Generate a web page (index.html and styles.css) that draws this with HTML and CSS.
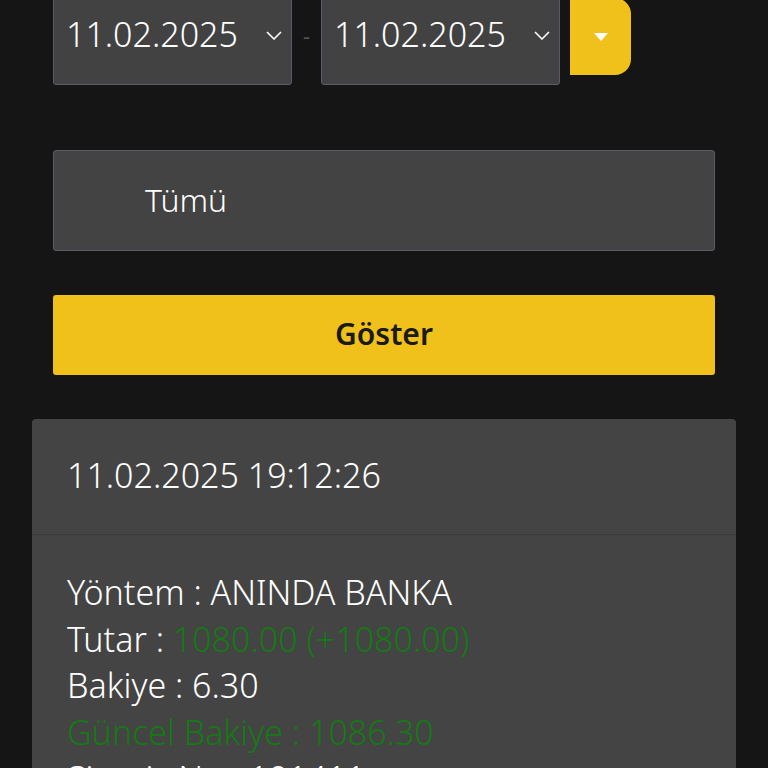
FILE: index.html
```html
<!DOCTYPE html>
<html lang="tr">
<head>
  <meta charset="UTF-8">
  <title>Hesap Hareketleri</title>
  <link rel="stylesheet" href="styles.css">
</head>
<body>

  <div class="page">
    <div class="filters">
      <div class="date-row">
        <div class="date-box">
          <span>11.02.2025</span>
          <svg class="chev" width="16" height="9" viewBox="0 0 16 9"><path d="M1 1 L8 8 L15 1" fill="none" stroke="#fff" stroke-width="1.6"/></svg>
        </div>
        <span class="dash">-</span>
        <div class="date-box">
          <span>11.02.2025</span>
          <svg class="chev" width="16" height="9" viewBox="0 0 16 9"><path d="M1 1 L8 8 L15 1" fill="none" stroke="#fff" stroke-width="1.6"/></svg>
        </div>
        <button class="range-btn">
          <svg width="14" height="8" viewBox="0 0 14 8"><path d="M0 0 L14 0 L7 8 Z" fill="#fff"/></svg>
        </button>
      </div>

      <div class="select-box">Tümü</div>

      <button class="show-btn">Göster</button>
    </div>

    <div class="card">
      <div class="card-head">11.02.2025 19:12:26</div>
      <div class="card-body">
        <div>Yöntem : ANINDA BANKA</div>
        <div>Tutar : <span class="green">1080.00 (+1080.00)</span></div>
        <div>Bakiye : 6.30</div>
        <div class="green">Güncel Bakiye : 1086.30</div>
        <div>Sipariş No : 101411</div>
      </div>
    </div>
  </div>

</body>
</html>
```

FILE: styles.css
```css
body {
  margin: 0;
  background-color: #151515;
  font-family: "Noto Sans", "Lato", sans-serif;
  color: #ffffff;
  overflow: hidden;
}
.page {
  padding: 0 32px;
  margin-top: -15px;
}
.filters {
  padding: 0 21px;
}
.date-row {
  display: flex;
  align-items: flex-start;
}
.date-box {
  width: 239px;
  height: 100px;
  box-sizing: border-box;
  background: #424242;
  border: 1px solid #5b5a6b;
  border-radius: 3px;
  display: flex;
  align-items: center;
  justify-content: space-between;
  padding: 0 9px 2px 12px;
  font-size: 34px;
  font-weight: 300;
}
.chev {
  margin-top: 2px;
}
.dash {
  width: 29px;
  text-align: center;
  color: #555;
  font-size: 22px;
  line-height: 100px;
}
.range-btn {
  margin-left: 10px;
  margin-top: 13px;
  width: 61px;
  height: 77px;
  border: none;
  background: #f0c01b;
  border-radius: 0 16px 16px 0;
  display: flex;
  align-items: center;
  justify-content: center;
  padding: 0;
}
.select-box {
  margin-top: 65px;
  height: 101px;
  box-sizing: border-box;
  background: #434343;
  border: 1px solid #5b5a6b;
  border-radius: 3px;
  padding: 0 0 2px 91px;
  display: flex;
  align-items: center;
  font-size: 32px;
  font-weight: 300;
}
.show-btn {
  display: block;
  width: 100%;
  margin-top: 44px;
  height: 80px;
  padding: 0 0 4px;
  border: none;
  border-radius: 3px;
  background: #f0c01b;
  color: #1a1a1a;
  font-family: "Noto Sans", "Lato", sans-serif;
  font-size: 30px;
  font-weight: 600;
}
.card {
  margin-top: 44px;
  background: #444444;
  border-radius: 4px;
}
.card-head {
  height: 116px;
  box-sizing: border-box;
  border-bottom: 1px solid #3b3b3b;
  padding: 0 0 4px 35px;
  display: flex;
  align-items: center;
  font-size: 34px;
  font-weight: 300;
}
.card-body {
  padding: 34px 35px 20px;
  font-size: 34px;
  font-weight: 300;
  line-height: 46.5px;
}
.green {
  color: #147a14;
}
```
